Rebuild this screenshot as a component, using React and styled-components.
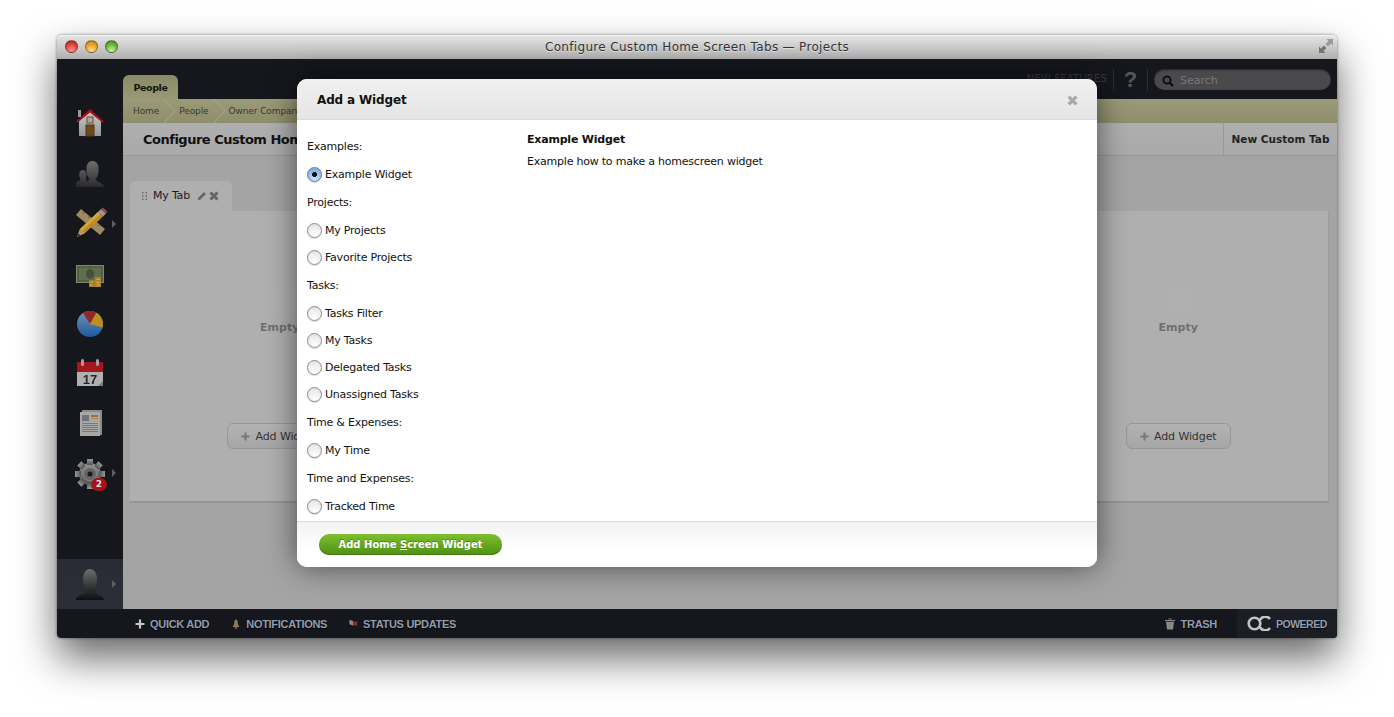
import React from 'react'
import styled, { createGlobalStyle } from 'styled-components'

const UI_FONT = `"DejaVu Sans", "Liberation Sans", sans-serif`

const Global = createGlobalStyle`
  html, body {
    margin: 0;
    background: #fff;
    font-family: ${UI_FONT};
  }
`

const Page = styled.div`
  height: 717px;
  box-sizing: border-box;
  padding: 35px 57px 79px;
  overflow: hidden;
`

const Win = styled.div`
  position: relative;
  height: 603px;
  display: flex;
  flex-direction: column;
  border-radius: 5px 5px 4px 4px;
  box-shadow: 0 20px 40px rgba(0, 0, 0, 0.6), 0 0 3px rgba(0, 0, 0, 0.5);
`

const TitleBar = styled.div`
  position: relative;
  height: 24px;
  flex: none;
  display: flex;
  align-items: center;
  justify-content: center;
  background: linear-gradient(#e6e6e6, #c9c9c9 55%, #aeaeae);
  border-radius: 5px 5px 0 0;
  box-shadow: inset 0 1px 0 #f4f4f4;
  font-size: 12px;
  color: #333;
  text-shadow: 0 1px 0 rgba(255, 255, 255, 0.5);
  letter-spacing: 0.33px;
`

const Lights = styled.div`
  position: absolute;
  left: 8px;
  top: 5px;
  display: flex;
  gap: 7px;
`

const Light = styled.span`
  width: 13px;
  height: 13px;
  border-radius: 50%;
  border: 1px solid rgba(0, 0, 0, 0.35);
  box-sizing: border-box;
  background: radial-gradient(circle at 50% 85%, ${(p) => p.$light} 0%, ${(p) => p.$mid} 55%, ${(p) => p.$dark} 100%);
`

const Expand = styled.svg`
  position: absolute;
  right: 3px;
  top: 3px;
`

const Body = styled.div`
  flex: 1;
  min-height: 0;
  display: flex;
`

const Sidebar = styled.nav`
  width: 66px;
  flex: none;
  display: flex;
  flex-direction: column;
  padding-top: 38px;
  box-sizing: border-box;
  background: #16171d;
`

const NavItem = styled.div`
  position: relative;
  height: 50px;
  flex: none;
  display: flex;
  align-items: center;
  justify-content: center;
  & > svg {
    opacity: 0.88;
  }
`

const UserItem = styled(NavItem)`
  margin-top: auto;
  background: linear-gradient(#292c35, #2b2e37);
`

const Caret = styled.span`
  position: absolute;
  left: 55px;
  top: ${(p) => p.$top || 22}px;
  border-left: 4px solid #5c5e62;
  border-top: 4px solid transparent;
  border-bottom: 4px solid transparent;
`

const Badge = styled.span`
  position: absolute;
  left: 34px;
  top: 31px;
  width: 16px;
  height: 13px;
  border-radius: 7px;
  background: #a31419;
  color: #ddd;
  font-size: 9px;
  font-weight: 700;
  line-height: 13px;
  text-align: center;
`

const Main = styled.div`
  flex: 1;
  min-width: 0;
  display: flex;
  flex-direction: column;
  background: #a4a4a4;
`

const TopBar = styled.div`
  height: 40px;
  flex: none;
  display: flex;
  align-items: flex-end;
  justify-content: space-between;
  background: #16171d;
`

const SectionTab = styled.div`
  width: 55px;
  height: 24px;
  box-sizing: border-box;
  padding-top: 1px;
  text-align: center;
  line-height: 24px;
  font-size: 9.5px;
  letter-spacing: -0.4px;
  font-weight: 700;
  color: #16160f;
  border-radius: 6px 6px 0 0;
  background: linear-gradient(#8b8a68, #9a9976);
`

const TopTools = styled.div`
  align-self: stretch;
  display: flex;
  align-items: center;
  padding: 1px 6px 0 0;
`

const NewFeatures = styled.span`
  font-size: 10px;
  letter-spacing: 0.02em;
  color: #3b3c41;
  text-transform: uppercase;
  padding-right: 6px;
  height: 22px;
  line-height: 20px;
  border-right: 1px solid #2e2f35;
`

const Help = styled.span`
  width: 33px;
  height: 22px;
  text-align: center;
  font: 700 22px/22px "Liberation Sans", sans-serif;
  color: #56575a;
  border-right: 1px solid #2e2f35;
`

const SearchBox = styled.div`
  width: 177px;
  height: 21px;
  margin-left: 6px;
  box-sizing: border-box;
  padding: 2px 0 0 8px;
  display: flex;
  align-items: center;
  gap: 6px;
  border-radius: 11px;
  background: #4a4a4c;
  box-shadow: inset 0 1px 2px rgba(0, 0, 0, 0.5);
  color: #77787a;
  font-size: 11px;
`

const Crumbs = styled.div`
  height: 24px;
  flex: none;
  display: flex;
  align-items: center;
  padding-left: 10px;
  background: linear-gradient(#9b9a78, #8f8e6c);
  font-size: 9px;
  letter-spacing: -0.1px;
  color: #3a3a30;
`

const Crumb = styled.span`
  display: flex;
  align-items: center;
  gap: 5px;
  margin-right: 3px;
`

const PageHead = styled.div`
  height: 33px;
  flex: none;
  display: flex;
  align-items: stretch;
  justify-content: space-between;
  box-sizing: border-box;
  padding-left: 20px;
  background: linear-gradient(#afafaf, #a9a9a9);
  border-bottom: 1px solid #979797;
`

const PageTitle = styled.h1`
  margin: 0;
  font-size: 13px;
  letter-spacing: -0.5px;
  line-height: 33px;
  font-weight: 700;
  color: #111;
`

const NewTab = styled.div`
  width: 114px;
  box-sizing: border-box;
  border-left: 1px solid #979797;
  text-align: center;
  font-size: 10.5px;
  line-height: 32px;
  font-weight: 700;
  color: #222;
`

const Content = styled.div`
  flex: 1;
  min-height: 0;
  padding: 25px 8px 0 7px;
`

const TabRow = styled.div`
  display: flex;
`

const Tab = styled.div`
  width: 102px;
  height: 30px;
  box-sizing: border-box;
  padding: 0 0 1px 12px;
  display: flex;
  align-items: center;
  gap: 2px;
  border-radius: 6px 6px 0 0;
  background: #afafaf;
  font-size: 11px;
  letter-spacing: -0.2px;
  color: #1a1a22;
`

const TabLabel = styled.span`
  margin: 0 5px 0 4px;
`

const Panel = styled.div`
  height: 292px;
  display: grid;
  grid-template-columns: repeat(4, 1fr);
  background: #afafaf;
  border-right: 1px solid #9c9c9c;
  border-bottom: 2px solid #959595;
  box-sizing: border-box;
`

const Column = styled.div`
  display: flex;
  flex-direction: column;
  align-items: center;
  padding-top: 79px;
`

const Placeholder = styled.div`
  width: 20px;
  height: 20px;
  background: #b0b0b0;
`

const EmptyText = styled.div`
  margin-top: 11px;
  font-size: 11px;
  line-height: 14px;
  font-weight: 700;
  color: #6f6f6f;
`

const AddButton = styled.div`
  margin-top: 88px;
  width: 105px;
  height: 26px;
  box-sizing: border-box;
  display: flex;
  align-items: center;
  justify-content: center;
  gap: 5px;
  border: 1px solid #979797;
  border-radius: 6px;
  background: linear-gradient(#b3b3b3, #a6a6a6);
  font-size: 11px;
  letter-spacing: -0.1px;
  color: #333;
`

const BottomBar = styled.div`
  height: 29px;
  flex: none;
  display: flex;
  align-items: center;
  justify-content: space-between;
  padding-left: 78px;
  background: #16171d;
  border-radius: 0 0 4px 4px;
  font: 700 11px "Liberation Sans", sans-serif;
  letter-spacing: -0.3px;
  color: #919dad;
  text-shadow: 0 1px 1px #000;
  text-transform: uppercase;
`

const BarGroup = styled.div`
  display: flex;
  align-items: center;
  height: 100%;
`

const BarLink = styled.span`
  display: flex;
  align-items: center;
  gap: 5px;
  margin-right: ${(p) => p.$space || 22}px;
`

const Powered = styled.div`
  width: 100px;
  height: 100%;
  box-sizing: border-box;
  display: flex;
  align-items: center;
  gap: 5px;
  padding-left: 10px;
  background: #1c1e26;
  border-radius: 0 0 4px 0;
  font-size: 10.5px;
  letter-spacing: -0.5px;
`

const Modal = styled.div`
  position: absolute;
  left: 240px;
  top: 44px;
  width: 800px;
  height: 488px;
  display: flex;
  flex-direction: column;
  background: #fff;
  border-radius: 10px;
  overflow: hidden;
`

const ModalShade = styled.div`
  position: absolute;
  left: 240px;
  top: 44px;
  width: 800px;
  height: 488px;
  border-radius: 10px;
  box-shadow: 0 0 30px rgba(0, 0, 0, 0.55);
`

const ModalHead = styled.div`
  height: 41px;
  flex: none;
  box-sizing: border-box;
  display: flex;
  align-items: center;
  justify-content: space-between;
  padding: 2px 19px 0 20px;
  background: linear-gradient(#f0f0f0, #e5e5e5);
  border-bottom: 1px solid #dcdcdc;
`

const ModalTitle = styled.h2`
  margin: 0;
  font-size: 12px;
  letter-spacing: -0.15px;
  font-weight: 700;
  color: #111;
`

const ModalBody = styled.div`
  flex: 1;
  min-height: 0;
  display: flex;
`

const WidgetList = styled.div`
  width: 220px;
  flex: none;
  box-sizing: border-box;
  padding: 12px 0 0 10px;
  letter-spacing: -0.22px;
`

const GroupLabel = styled.div`
  height: 29px;
  line-height: 29px;
  font-size: 11px;
  color: #111;
`

const Option = styled.label`
  height: 27px;
  display: flex;
  align-items: center;
  gap: 3px;
  font-size: 11px;
  color: #111;
`

const Radio = styled.input.attrs({ type: 'radio', name: 'widget' })`
  appearance: none;
  width: 15px;
  height: 15px;
  margin: 0;
  border-radius: 50%;
  border: 1px solid #8d8d8d;
  background: radial-gradient(circle at 50% 90%, #fff, #eee 60%, #d8d8d8);
  box-shadow: 0 1px 1px rgba(0, 0, 0, 0.15);
  &:checked {
    border-color: #5c7ca8;
    background: radial-gradient(circle, #111 0 2.2px, transparent 2.8px),
      radial-gradient(circle at 50% 85%, #cfe3fb, #94b9e8 60%, #7a9fd2);
  }
`

const Detail = styled.div`
  padding: 13px 0 0 10px;
`

const DetailTitle = styled.div`
  font-size: 11px;
  letter-spacing: -0.2px;
  line-height: 14px;
  font-weight: 700;
  color: #111;
`

const DetailText = styled.div`
  margin-top: 8px;
  font-size: 11px;
  letter-spacing: -0.22px;
  line-height: 14px;
  color: #111;
`

const ModalFoot = styled.div`
  height: 46px;
  flex: none;
  box-sizing: border-box;
  padding: 12px 0 0 22px;
  border-top: 1px solid #d9d9d9;
  background: linear-gradient(#f2f2f2, #fff 60%);
`

const GreenButton = styled.div`
  width: 183px;
  height: 21px;
  line-height: 21px;
  text-align: center;
  border-radius: 11px;
  background: linear-gradient(#7ec02e, #4f8f14);
  box-shadow: inset 0 -1px 0 #3f7a10;
  font-size: 10px;
  font-weight: 700;
  color: #fff;
  text-shadow: 0 -1px 0 rgba(0, 0, 0, 0.25);
`

const Chevron = () => (
  <svg width="12" height="24" viewBox="0 0 12 24">
    <path d="M0 0 L11 12 L0 24" fill="none" stroke="#a9a888" />
  </svg>
)

const Cross = ({ size = 10, color = '#a9a9a9' }) => (
  <svg width={size} height={size} viewBox="0 0 10 10">
    <path d="M1.5 1.5 L8.5 8.5 M8.5 1.5 L1.5 8.5" stroke={color} strokeWidth="3" />
  </svg>
)

const Plus = ({ size = 9, color = '#777', weight = 2 }) => (
  <svg width={size} height={size} viewBox="0 0 9 9">
    <path d="M4.5 0.5 V8.5 M0.5 4.5 H8.5" stroke={color} strokeWidth={weight} />
  </svg>
)

const HomeIcon = () => (
  <svg width="36" height="36" viewBox="0 0 36 36">
    <defs>
      <linearGradient id="wall" x1="0" y1="0" x2="0" y2="1">
        <stop offset="0" stopColor="#e2e2e2" />
        <stop offset="1" stopColor="#a9a9a9" />
      </linearGradient>
    </defs>
    <rect x="6" y="6" width="3" height="7" fill="#aaa" />
    <path d="M7 17 L18 7 L29 17 V32 H7 Z" fill="url(#wall)" />
    <path d="M4 17.5 L18 5 L32 17.5 L30.5 18.5 L18 8.5 L5.5 18.5 Z" fill="#b80e16" />
    <rect x="15" y="13" width="6" height="6" fill="#c9b9a0" stroke="#6b5a45" />
    <rect x="14" y="21" width="8" height="11" fill="#7d4e1c" stroke="#5c3a14" />
  </svg>
)

const PeopleIcon = () => (
  <svg width="36" height="36" viewBox="0 0 36 36">
    <defs>
      <linearGradient id="bust" x1="0" y1="0" x2="0" y2="1">
        <stop offset="0" stopColor="#7b7b7b" />
        <stop offset="1" stopColor="#2f2f2f" />
      </linearGradient>
    </defs>
    <path d="M4 33 V29 C5 27 8 27 8.5 25.5 C7 23 6.5 20 8 17.5 C9.5 15.5 12 15.5 13.5 17.5 C14.5 19 15 21 14 24 L16 33 Z" fill="url(#bust)" opacity="0.75" />
    <path d="M9 33 C9 29 15 28.5 17.5 25.5 C15 22 14 18 14.5 13.5 C15 9.5 17 7 20.5 7 C24 7 26 9.5 26.5 13.5 C27 18 26 22 23.5 25.5 C26 28.5 32 29 32 33 Z" fill="url(#bust)" />
  </svg>
)

const ToolsIcon = () => (
  <svg width="36" height="36" viewBox="0 0 36 36">
    <path d="M9 5 L33 25 L28 31 L4 11 Z" fill="#b09a6c" />
    <path d="M11 10 L13 8 M16 14 L18 12 M21 18 L23 16 M26 22 L28 20" stroke="#6e5c38" />
    <path d="M26 8 L31 12.5 L13 29 L5 33 L8 25 Z" fill="#d99a1c" />
    <path d="M26 8 L28.5 10 L10 27 L8 25 Z" fill="#e8bc40" />
    <path d="M8 25 L13 29 L5 33 Z" fill="#cfa877" />
    <path d="M5 33 L6.5 29.5 L8.5 31.2 Z" fill="#333" />
    <path d="M26 8 L29 5 L34 9.5 L31 12.5 Z" fill="#a9a9a9" />
    <path d="M29 5 L31 3.5 L35.5 7.5 L34 9.5 Z" fill="#b5494b" />
  </svg>
)

const MoneyIcon = () => (
  <svg width="36" height="36" viewBox="0 0 36 36">
    <rect x="4.5" y="11.5" width="27" height="17" fill="#5c6b4b" stroke="#8c9878" />
    <rect x="7" y="14" width="22" height="12" fill="#6b7a58" />
    <ellipse cx="18" cy="20" rx="4" ry="5" fill="#4b5a3f" />
    <rect x="17" y="26" width="6" height="7" fill="#b58c2b" />
    <rect x="23" y="23" width="6" height="10" fill="#c2962f" />
    <path d="M18 28 H21 M18 31 H21 M24.5 25.5 H27.5 M24.5 28.5 H27.5 M24.5 31 H27.5" stroke="#e4c46c" />
  </svg>
)

const PieIcon = () => (
  <svg width="36" height="36" viewBox="0 0 36 36">
    <defs>
      <linearGradient id="pieBlue" x1="0" y1="0" x2="0" y2="1">
        <stop offset="0" stopColor="#7fa6c4" />
        <stop offset="1" stopColor="#1f62b5" />
      </linearGradient>
    </defs>
    <circle cx="18" cy="20" r="13" fill="url(#pieBlue)" />
    <path d="M18 20 L11 9 A13 13 0 0 1 24.5 8.8 Z" fill="#a52a2c" />
    <path d="M18 20 L24.5 8.8 A13 13 0 0 1 30.5 23.5 Z" fill="#d4a01c" />
  </svg>
)

const CalendarIcon = () => (
  <svg width="36" height="36" viewBox="0 0 36 36">
    <rect x="5" y="8" width="26" height="10" fill="#b8181d" />
    <rect x="5" y="18" width="26" height="14" fill="#c6c6c6" />
    <rect x="9" y="5" width="3" height="7" rx="1.5" fill="#b5b5b5" />
    <rect x="24" y="5" width="3" height="7" rx="1.5" fill="#b5b5b5" />
    <text x="18" y="30" textAnchor="middle" fontSize="13" fontWeight="700" fontFamily="Liberation Sans, sans-serif" fill="#2b2b2b">17</text>
    <path d="M26 32 L31 27 V32 Z" fill="#888" />
  </svg>
)

const NewsIcon = () => (
  <svg width="36" height="36" viewBox="0 0 36 36">
    <rect x="10" y="6" width="20" height="25" fill="#9c9c9c" />
    <rect x="8" y="8" width="20" height="24" fill="#bdbdbd" />
    <rect x="10" y="11" width="7" height="6" fill="#808080" />
    <path d="M19 12 H26" stroke="#b22d22" />
    <path d="M19 14.5 H26" stroke="#c99c26" />
    <path d="M10 19.5 H26 M10 21.5 H26 M10 23.5 H26 M10 25.5 H26 M10 27.5 H26" stroke="#888" />
  </svg>
)

const GearIcon = () => (
  <svg width="36" height="36" viewBox="0 0 36 36">
    <defs>
      <linearGradient id="gear" x1="0" y1="0" x2="0" y2="1">
        <stop offset="0" stopColor="#a9a9a9" />
        <stop offset="1" stopColor="#5d5d5d" />
      </linearGradient>
    </defs>
    <g fill="url(#gear)">
      <circle cx="18" cy="20" r="11" />
      {[0, 45, 90, 135, 180, 225, 270, 315].map((a) => (
        <rect key={a} x="15" y="5" width="6" height="6" transform={`rotate(${a} 18 20)`} />
      ))}
    </g>
    <circle cx="18" cy="20" r="6.5" fill="#6f6f6f" stroke="#999" />
    <circle cx="18" cy="20" r="2.5" fill="#1c1c1c" />
  </svg>
)

const UserIcon = () => (
  <svg width="36" height="36" viewBox="0 0 36 36">
    <defs>
      <linearGradient id="user" x1="0" y1="0" x2="0" y2="1">
        <stop offset="0" stopColor="#777" />
        <stop offset="0.6" stopColor="#333" />
        <stop offset="1" stopColor="#0c0c0c" />
      </linearGradient>
    </defs>
    <path d="M4 34 C4 29 12 29 14 26 C12 23 11 18 11 13 C11 7 14 3 18 3 C22 3 25 7 25 13 C25 18 24 23 22 26 C24 29 32 29 32 34 Z" fill="url(#user)" />
  </svg>
)

const OcLogo = () => (
  <svg width="24" height="15" viewBox="0 0 24 15">
    <circle cx="7.5" cy="7.5" r="5.8" fill="none" stroke="#c4c4c4" strokeWidth="2.6" />
    <path d="M23 3 A5.8 5.8 0 0 0 13 4 M23 12 A5.8 5.8 0 0 1 13 11" fill="none" stroke="#c4c4c4" strokeWidth="2.6" />
  </svg>
)

const widgetGroups = [
  ['Examples:', ['Example Widget']],
  ['Projects:', ['My Projects', 'Favorite Projects']],
  ['Tasks:', ['Tasks Filter', 'My Tasks', 'Delegated Tasks', 'Unassigned Tasks']],
  ['Time & Expenses:', ['My Time']],
  ['Time and Expenses:', ['Tracked Time']],
]

export default function App() {
  return (
    <Page>
      <Global />
      <Win>
        <TitleBar>
          <Lights>
            <Light $light="#ff9a94" $mid="#e0443e" $dark="#a8201a" />
            <Light $light="#ffdf8a" $mid="#e8a22c" $dark="#b07616" />
            <Light $light="#c8f0a0" $mid="#6ab53f" $dark="#3f8a20" />
          </Lights>
          Configure Custom Home Screen Tabs — Projects
          <Expand width="16" height="16" viewBox="0 0 16 16">
            <path d="M8.5 1 H15 V7.5 L13 5.5 L10 8.5 L7.5 6 L10.5 3 Z" fill="#9a9a9a" />
            <path d="M1 8.5 V15 H7.5 L5.5 13 L8.5 10 L6 7.5 L3 10.5 Z" fill="#757575" />
          </Expand>
        </TitleBar>
        <Body>
          <Sidebar>
            <NavItem><HomeIcon /></NavItem>
            <NavItem><PeopleIcon /></NavItem>
            <NavItem><ToolsIcon /><Caret $top={23} /></NavItem>
            <NavItem><MoneyIcon /></NavItem>
            <NavItem><PieIcon /></NavItem>
            <NavItem><CalendarIcon /></NavItem>
            <NavItem><NewsIcon /></NavItem>
            <NavItem><GearIcon /><Caret $top={22} /><Badge>2</Badge></NavItem>
            <UserItem><UserIcon /><Caret $top={21} /></UserItem>
          </Sidebar>
          <Main>
            <TopBar>
              <SectionTab>People</SectionTab>
              <TopTools>
                <NewFeatures>New Features</NewFeatures>
                <Help>?</Help>
                <SearchBox>
                  <svg width="12" height="12" viewBox="0 0 12 12">
                    <circle cx="5" cy="5" r="3.6" fill="none" stroke="#0c0c0c" strokeWidth="1.8" />
                    <path d="M7.8 7.8 L11 11" stroke="#0c0c0c" strokeWidth="2.2" />
                  </svg>
                  Search
                </SearchBox>
              </TopTools>
            </TopBar>
            <Crumbs>
              <Crumb>Home <Chevron /></Crumb>
              <Crumb>People <Chevron /></Crumb>
              <Crumb>Owner Company</Crumb>
            </Crumbs>
            <PageHead>
              <PageTitle>Configure Custom Home Screen Tabs</PageTitle>
              <NewTab>New Custom Tab</NewTab>
            </PageHead>
            <Content>
              <TabRow>
                <Tab>
                  <svg width="5" height="8" viewBox="0 0 5 8">
                    <path d="M0 0 H1.4 V1.4 H0 Z M3.6 0 H5 V1.4 H3.6 Z M0 3.3 H1.4 V4.7 H0 Z M3.6 3.3 H5 V4.7 H3.6 Z M0 6.6 H1.4 V8 H0 Z M3.6 6.6 H5 V8 H3.6 Z" fill="#666" />
                  </svg>
                  <TabLabel>My Tab</TabLabel>
                  <svg width="10" height="10" viewBox="0 0 10 10">
                    <path d="M0.5 9.5 L1.5 6.5 L7 1 L9 3 L3.5 8.5 Z" fill="#666" />
                  </svg>
                  <Cross size={10} color="#666" />
                </Tab>
              </TabRow>
              <Panel>
                {[0, 1, 2, 3].map((col) => (
                  <Column key={col}>
                    <Placeholder />
                    <EmptyText>Empty</EmptyText>
                    <AddButton><Plus />Add Widget</AddButton>
                  </Column>
                ))}
              </Panel>
            </Content>
          </Main>
        </Body>
        <BottomBar>
          <BarGroup>
            <BarLink><Plus size={10} color="#c9c9c9" />Quick Add</BarLink>
            <BarLink>
              <svg width="10" height="12" viewBox="0 0 12 12">
                <path d="M6 0.5 C7.5 0.5 8 2 8 4 C8 6 9 8 10 9.5 H2 C3 8 4 6 4 4 C4 2 4.5 0.5 6 0.5 Z M4.5 10 H7.5 V11.5 H4.5 Z" fill="#8d7a5a" />
              </svg>
              Notifications
            </BarLink>
            <BarLink>
              <svg width="9" height="11" viewBox="0 0 11 11">
                <path d="M0.5 1 L5 2.5 V8 L0.5 6.5 Z" fill="#8a8a8a" />
                <path d="M5 3 L10 3.5 V8 L5 8 Z" fill="#9c2a2c" />
              </svg>
              Status Updates
            </BarLink>
          </BarGroup>
          <BarGroup>
            <BarLink $space={20}>
              <svg width="12" height="12" viewBox="0 0 11 12">
                <path d="M0.5 2 H10.5 V3.2 H0.5 Z M1.5 4 H9.5 L8.5 11.5 H2.5 Z M4 0.5 H7 V1.5 H4 Z" fill="#888" />
              </svg>
              Trash
            </BarLink>
            <Powered><OcLogo />Powered</Powered>
          </BarGroup>
        </BottomBar>
        <ModalShade />
        <Modal>
          <ModalHead>
            <ModalTitle>Add a Widget</ModalTitle>
            <Cross size={11} />
          </ModalHead>
          <ModalBody>
            <WidgetList>
              {widgetGroups.map(([label, items]) => (
                <div key={label}>
                  <GroupLabel>{label}</GroupLabel>
                  {items.map((item) => (
                    <Option key={item}>
                      <Radio defaultChecked={item === 'Example Widget'} />
                      {item}
                    </Option>
                  ))}
                </div>
              ))}
            </WidgetList>
            <Detail>
              <DetailTitle>Example Widget</DetailTitle>
              <DetailText>Example how to make a homescreen widget</DetailText>
            </Detail>
          </ModalBody>
          <ModalFoot>
            <GreenButton>Add Home <u>S</u>creen Widget</GreenButton>
          </ModalFoot>
        </Modal>
      </Win>
    </Page>
  )
}
